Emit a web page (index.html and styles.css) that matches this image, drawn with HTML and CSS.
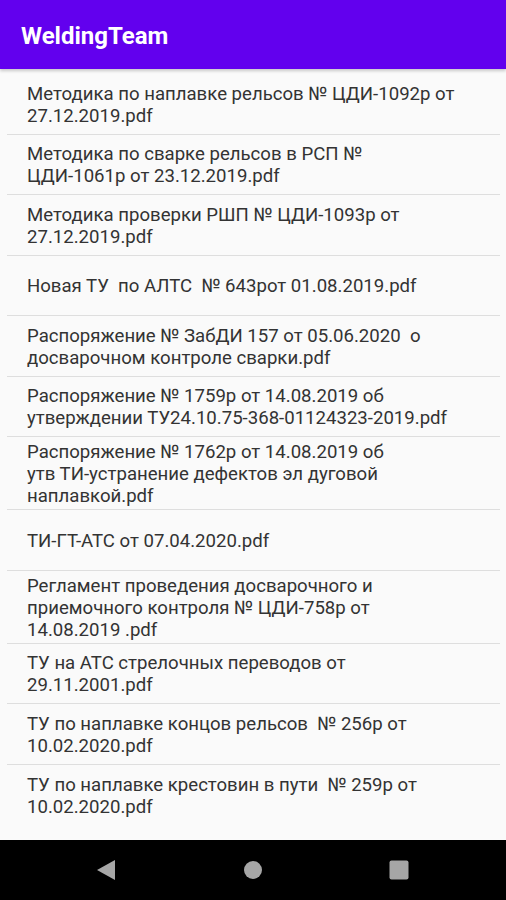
FILE: index.html
```html
<!DOCTYPE html>
<html>
<head>
  <meta charset="UTF-8">
  <title>WeldingTeam</title>
  <link rel="stylesheet" href="styles.css">
</head>
<body>
  <div class="screen">
    <div class="toolbar">WeldingTeam</div>
    <ul class="files">
      <li>Методика по наплавке рельсов № ЦДИ-1092р от 27.12.2019.pdf</li>
      <li>Методика по сварке рельсов в РСП № ЦДИ-1061р от 23.12.2019.pdf</li>
      <li>Методика проверки РШП № ЦДИ-1093р от 27.12.2019.pdf</li>
      <li>Новая ТУ&nbsp; по АЛТС&nbsp; № 643рот 01.08.2019.pdf</li>
      <li>Распоряжение № ЗабДИ 157 от 05.06.2020&nbsp; о досварочном контроле сварки.pdf</li>
      <li>Распоряжение № 1759р от 14.08.2019 об утверждении ТУ24.10.75-368-01124323-2019.pdf</li>
      <li>Распоряжение № 1762р от 14.08.2019 об<br>утв ТИ-устранение дефектов эл дуговой наплавкой.pdf</li>
      <li>ТИ-ГТ-АТС от 07.04.2020.pdf</li>
      <li>Регламент проведения досварочного и приемочного контроля № ЦДИ-758р от 14.08.2019 .pdf</li>
      <li>ТУ на АТС стрелочных переводов от 29.11.2001.pdf</li>
      <li>ТУ по наплавке концов рельсов&nbsp; № 256р от 10.02.2020.pdf</li>
      <li>ТУ по наплавке крестовин в пути&nbsp; № 259р от 10.02.2020.pdf</li>
    </ul>
    <div class="navbar">
      <svg class="nav-icon" width="20" height="20" viewBox="0 0 20 20"><path d="M18 0 L18 20 L0 10 Z" fill="#a6a6a6"/></svg>
      <svg class="nav-icon" width="20" height="20" viewBox="0 0 20 20"><circle cx="10" cy="10" r="9" fill="#a6a6a6"/></svg>
      <svg class="nav-icon" width="20" height="20" viewBox="0 0 20 20"><rect x="0.5" y="0.5" width="19" height="19" rx="2" fill="#a6a6a6"/></svg>
    </div>
  </div>
</body>
</html>
```

FILE: styles.css
```css
body {
  margin: 0;
  padding: 0;
  font-family: Roboto, "Noto Sans", sans-serif;
  background-color: #000;
}
.screen {
  width: 506px;
  height: 900px;
  display: flex;
  flex-direction: column;
  background-color: #fafafa;
}
.toolbar {
  height: 69px;
  flex: none;
  display: flex;
  align-items: center;
  padding-left: 21px;
  padding-top: 3px;
  box-sizing: border-box;
  background-color: #6200ee;
  color: #fff;
  font-size: 24px;
  font-weight: bold;
  box-shadow: 0 2px 3px rgba(0, 0, 0, 0.2);
  position: relative;
  z-index: 1;
}
.files {
  list-style: none;
  margin: 0;
  padding: 5px 6px 0 7px;
  flex: 1;
  overflow: hidden;
}
.files li {
  min-height: 60.5px;
  box-sizing: border-box;
  display: flex;
  align-items: center;
  padding: 4px 40px 2px 20px;
  border-bottom: 1px solid #dedede;
  color: #333;
  font-size: 18.6px;
  line-height: 22px;
}
.files li:last-child {
  border-bottom: none;
}
.navbar {
  height: 60px;
  flex: none;
  display: flex;
  align-items: center;
  gap: 126px;
  padding-left: 97px;
  background-color: #000;
}
```
